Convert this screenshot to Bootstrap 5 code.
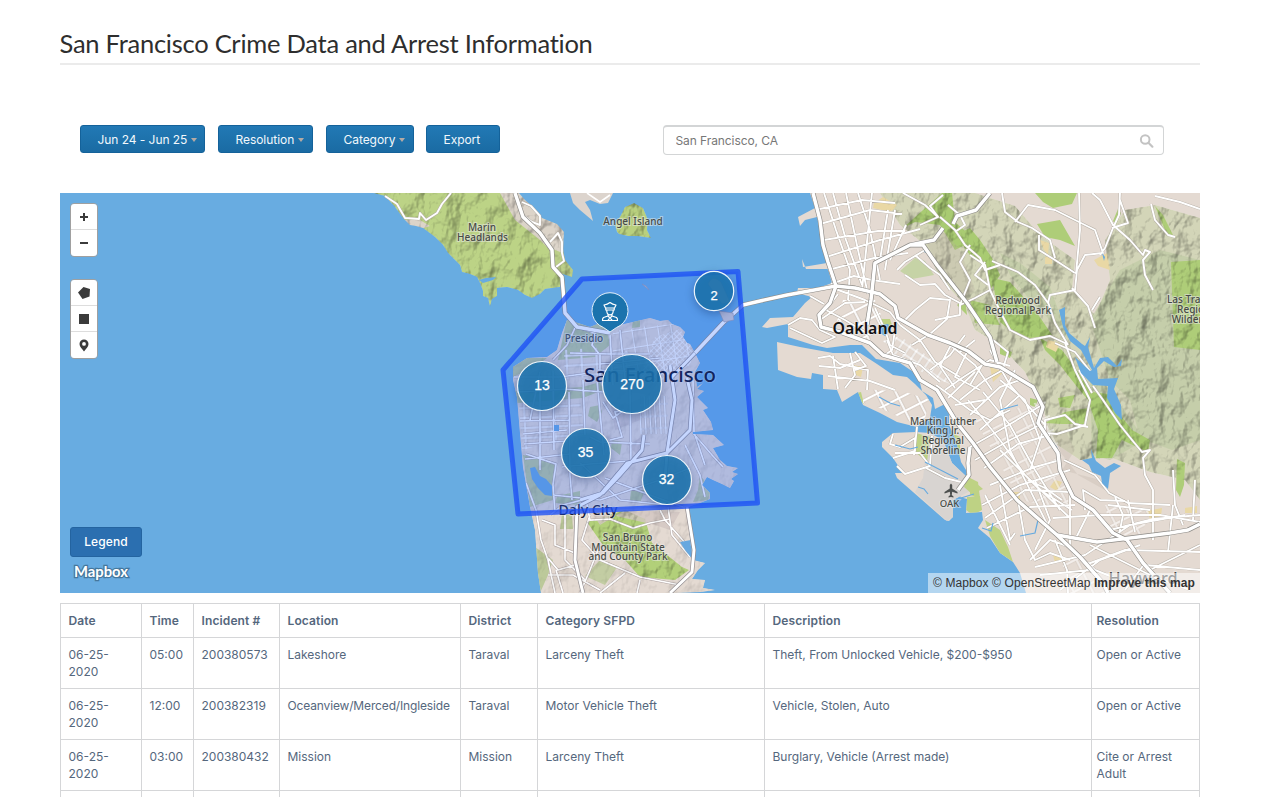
<!DOCTYPE html>
<html lang="en">
<head>
<meta charset="utf-8">
<meta name="viewport" content="width=device-width, initial-scale=1">
<title>San Francisco Crime Data and Arrest Information</title>
<link rel="stylesheet" href="https://cdn.jsdelivr.net/npm/bootstrap@5.3.0/dist/css/bootstrap.min.css">
<style>
body{font-family:Inter,"Liberation Sans",sans-serif;font-size:12px;color:#55677d;overflow:hidden;height:797px;background:#fff}
.page-wrap{width:1140px;height:797px;margin-left:60px}
.page-title{font-family:Lato,sans-serif;font-weight:400;font-size:25.5px;line-height:36px;color:#2e2e2e;border-bottom:2px solid #ebebeb;padding-top:25px;height:65px;margin:0 0 0 -.5px;letter-spacing:-.25px;font-variant-ligatures:none}
.toolbar{padding:60px 36px 0 20px;height:128px}
.btn-filter{height:28px;padding:0 0 0 16.5px;font-size:12px;line-height:27px;color:#f2f8fc;background:linear-gradient(#2279b5,#1a6ba3);border:1px solid #14629a;border-radius:3px;text-align:left;letter-spacing:-.05px;white-space:nowrap;--bs-btn-hover-color:#fff}
.btn-filter:hover{background:#1a6ba3}
.btn-filter .caret{display:inline-block;border:3.5px solid transparent;border-top:4px solid #b5aaa4;border-bottom:0;vertical-align:2px;margin-left:3.5px}
.search-box{width:501px;height:30px;border:1px solid #d3d5d6;border-top-width:2px;border-radius:4px;padding:0 8px 0 11.5px}
.search-box input{font-size:12px;color:#777;letter-spacing:-.08px;background:none}
.map-box{width:1140px;height:400px}
.map-box>svg{display:block}
.tool-stack{left:10px;width:28px;border:1px solid #a0a0a0;border-radius:4px;overflow:hidden}
.tool-stack button{display:flex;align-items:center;justify-content:center;width:26px;height:26px;border:0;border-bottom:1px solid #ddd;background:#fff;padding:0}
.tool-stack button:last-child{border-bottom:0}
.btn-legend{left:10px;top:334px;width:72px;height:30px;background:#2b6fb0;border:1px solid #2464a0;border-radius:3px;color:#fff;font-size:12px;font-weight:500;padding:0;letter-spacing:.1px}
.attrib{right:0;bottom:0;width:272px;height:20px;background:rgba(255,255,255,.5);font:12px/20px "Liberation Sans",sans-serif;color:#333;padding-left:5px;white-space:nowrap;letter-spacing:.1px}
.crime-table{table-layout:fixed;width:1139px;margin-top:10px;border-color:#d5d6d8;color:#55677d}
.crime-table th,.crime-table td{padding:8px 4px 0 7.5px;line-height:17px;border-color:#d5d6d8;letter-spacing:0;vertical-align:top;color:#55677d}
.crime-table th{height:34px;font-weight:600;letter-spacing:.12px}
.crime-table td{height:51px}
.crime-table .tight{letter-spacing:-.15px}
.crime-table tr>:last-child{padding-left:4.5px}
.lbl{font-family:"Noto Sans",sans-serif;font-size:10px;text-anchor:middle;fill:#484b46;stroke:#eee;stroke-opacity:.5;stroke-width:2px;paint-order:stroke;font-weight:500}
.cnt{font-family:"Liberation Sans",sans-serif;font-size:14px;text-anchor:middle;fill:#fff;stroke:#fff;stroke-width:.25}
.terrain{mix-blend-mode:multiply}
</style>
</head>
<body>
<main class="page-wrap overflow-hidden">
<h1 class="page-title">San Francisco Crime Data and Arrest Information</h1>
<div class="toolbar d-flex justify-content-between align-items-start">
  <div class="d-flex">
    <button class="btn btn-filter" style="width:125px;margin-right:13px">Jun 24 - Jun 25<i class="caret"></i></button>
    <button class="btn btn-filter" style="width:95px;margin-right:13px">Resolution<i class="caret"></i></button>
    <button class="btn btn-filter" style="width:88px;margin-right:12px">Category<i class="caret"></i></button>
    <button class="btn btn-filter" style="width:74px">Export</button>
  </div>
  <div class="search-box d-flex align-items-center">
    <input class="border-0 p-0 flex-grow-1" value="San Francisco, CA" aria-label="Location">
    <svg width="16" height="16" viewBox="0 0 16 16" fill="none" stroke="#c3c3c3" stroke-linecap="round"><circle cx="6.2" cy="6.5" r="4.3" stroke-width="2"/><path d="M9.7 10 13.4 13.7" stroke-width="2.2"/></svg>
  </div>
</div>

<div class="map-box position-relative overflow-hidden">
<svg width="1140" height="400" viewBox="60 193 1140 400">
<defs>
  <filter id="relief" x="0" y="0" width="100%" height="100%" color-interpolation-filters="sRGB"><feTurbulence type="fractalNoise" baseFrequency=".055 .04" numOctaves="4" seed="8"/><feDiffuseLighting surfaceScale="7" diffuseConstant="1.2" lighting-color="#fff"><feDistantLight azimuth="225" elevation="54"/></feDiffuseLighting></filter>
  <pattern id="gridA" width="13" height="17" patternUnits="userSpaceOnUse" patternTransform="rotate(-9)"><path d="M0 0H13M0 0V17" stroke="#bdb3aa" stroke-width="2.6"/><path d="M0 0H13M0 0V17" stroke="#fff" stroke-width="2"/></pattern>
  <pattern id="gridB" width="17" height="14" patternUnits="userSpaceOnUse" patternTransform="rotate(-27)"><path d="M8 0V14M0 7H17" stroke="#bdb3aa" stroke-width="2.7"/><path d="M8 0V14M0 7H17" stroke="#fff" stroke-width="1.8"/></pattern>
  <pattern id="gridC" width="8" height="9" patternUnits="userSpaceOnUse" patternTransform="rotate(34)"><path d="M4 0V9M0 4H8" stroke="#bdb3aa" stroke-width="2.2"/><path d="M4 0V9M0 4H8" stroke="#fff" stroke-width="1.5"/></pattern>
  <pattern id="gridD" width="15" height="10" patternUnits="userSpaceOnUse" patternTransform="rotate(-3)"><path d="M7 0V10M0 5H15" stroke="#b3aaa6" stroke-width="2.3"/><path d="M7 0V10M0 5H15" stroke="#fff" stroke-width="1.5"/></pattern>
  <pattern id="gridF" width="5" height="12" patternUnits="userSpaceOnUse" patternTransform="rotate(-3)"><path d="M2.500 0V12M0 6H5" stroke="#b3aaa6" stroke-width="1.9"/><path d="M2.500 0V12M0 6H5" stroke="#fff" stroke-width="1.2"/></pattern>
  <pattern id="gridE" width="4" height="4" patternUnits="userSpaceOnUse" patternTransform="rotate(-45)"><path d="M0 0H4M0 0V4" stroke="#fff" stroke-width="1.3"/></pattern>
  <path id="marin" d="M373 193 385 196 395 207 403 218 410 225 416 226 423 228 435 237 443 245 448 253 460 265 462 272 470 274 477 277 480 283 483 291 483 296 488 298 490 307 492 299 497 296 497 288 507 287 518 290 525 295 532 298 540 294 545 289 560 287 562 279 557 272 572 277 573 270 565 260 563 249 564 232 557 224 542 218 533 207 525 200 519 193Z"/>
  <path id="angel" d="M617 232 615 225 621 215 625 207 634 203 643 208 648 220 647 230 651 238 637 236 628 236 619 234Z"/>
  <path id="sf" d="M567 320 562 333 557 350 547 357 527 358 513 367 513 380 517 397 520 433 523 467 530 507 535 530 538 573 541 593H673L700 592 715 590 703 588 705 580 692 579 698 570 705 563 693 560 690 540 688 507 700 503 710 499 710 493 702 485 707 477 713 480 722 484 730 488 734 481 731 479 738 474 732 472 738 468 727 466 720 460 713 448 724 445 713 435 693 434 693 432 713 430 711 422 703 410 708 408 697 397 704 391 697 389 703 383 697 387 695 372 700 363 695 353 690 344 687 343 683 337 685 332 680 327 672 324 668 320 660 321 650 318 633 322 620 325 600 323 590 327 578 323Z"/>
  <path id="east" d="M810 193 815 208 798 217 800 226 805 220 817 217 823 243 827 263 803 267 802 259 806 269 828 269 832 283 818 288 798 288 797 293 812 297 805 303 793 317 770 318 762 327 767 328 788 324 788 337 813 345 827 348 850 345 862 345 876 359 900 363 918 375 922 391 933 398 935 409 945 404 949 413 949 425 956 440 961 462 966 470 968 485 960 497 967 499 966 513 982 512 983 520 978 528 990 538 1000 553 1013 562 1020 573 1026 593H1200V193ZM777 342 778 370 797 377 811 379 812 373 823 375 823 389 837 390 842 402 858 392 863 405 880 413 897 422 917 427 930 418 932 405 926 395 915 384 907 377 893 375 877 364 860 353 833 353 800 347ZM893 433 882 442 882 447 893 458 903 473 895 473 897 478 945 520 949 521 953 517 953 500 970 491 968 478 952 463 943 440 930 433 916 432Z"/>
  <path id="hills" d="M880 193H975L1015 206 1040 235 1075 260 1072 290 1095 315 1110 280 1105 240 1125 210 1155 205 1200 218V500L1185 480 1150 472 1112 458 1080 460 1050 440 1044 410 1025 372 1000 345 975 330 965 305 940 278 925 245 900 225Z"/>
  <path id="bruno" d="M587 522 625 510 645 519 652 543 682 567 689 570 675 580 640 577 625 560 605 548Z"/>
  <clipPath id="cm"><use href="#marin"/></clipPath><clipPath id="cs"><use href="#sf"/></clipPath><clipPath id="ce"><use href="#east"/></clipPath><clipPath id="ch"><use href="#hills"/></clipPath><clipPath id="cpark"><use href="#bruno"/></clipPath><clipPath id="ca"><use href="#angel"/></clipPath>
  <g id="minor" fill="none">
    <path d="M824 193 836 230 850 270 848 300M833 193 846 240 862 285M846 193 858 250 868 294M858 193 870 230 880 280M872 193 862 290M888 210 880 260M895 210 885 270M906 225 890 260M815 210 862 200 895 203M820 224 870 210 902 214M824 240 878 231 905 231M826 257 880 240 920 229M828 270 874 258 908 253M831 284 854 276 872 280 900 284M833 288 865 300 890 312 900 325M838 294 826 310 845 320 870 335M820 320 845 303 865 302M788 325 800 318 812 320 820 330 835 337 822 343 790 328M810 296 824 304M885 355 892 350 895 330M875 308 885 330 890 345 905 353"/>
    <path d="M818 358 830 356 840 364 868 370 867 390M819 366 840 368 860 360M833 356 838 389M850 353 855 375 845 388M828 376 870 381 895 390M855 352 866 366 855 370M887 340 893 355 920 365 940 382M900 325 920 340 935 362 960 377M912 345 930 334 947 319 950 300 930 298 915 310 905 320M905 275 920 285 935 284 945 295 960 303 960 315 935 320M920 225 938 217 930 206 943 195M940 217 955 230 965 245 980 258 985 270 1000 265M970 245 960 262 970 280 960 305 975 298 990 290M915 255 930 268 940 275 950 290M897 270 905 262 925 250M985 262 975 275 988 285M948 205 960 215 965 225 955 232"/>
    <path d="M945 390 962 378 990 360 1010 366M930 370 950 355 965 335M936 385 970 410 990 420 1010 410M952 343 940 366 955 388M968 350 955 377 980 390M985 360 970 385M960 400 985 380 1003 370M970 415 1000 387 1020 380M980 430 1020 395M968 400 1000 440 1025 475 1070 518M983 392 1010 425 1035 470 1060 510M1000 380 1025 400 1040 440M990 350 1010 385 1045 425 1030 470M1015 370 1000 400 1010 450 1050 530M970 447 1000 430 1042 405M975 460 1010 440 1040 425M984 468 1018 444 1050 435M990 485 1035 467 1060 460M982 505 1020 485 1070 470M985 518 1025 490 1070 492M987 528 1030 507 1075 505M1000 485 1010 540 1015 533M1018 500 1025 540 1035 560 1050 553 1070 560M1035 480 1050 520 1035 550M1000 450 1040 490 1072 510M985 495 1010 545M948 398 975 372M955 405 985 400M950 345 975 365 992 390M975 340 960 352M993 340 1008 352 1002 372"/>
    <path d="M903 193 925 205 938 217M1002 193 1005 212 1018 222 1032 228 1050 240 1055 258M1015 222 1028 205 1055 210 1085 225 1095 230 1103 253 1085 255 1077 270 1075 290 1050 295 1048 303 1035 285 1018 272 992 261M1039 235 1039 250 1055 260 1075 273M1079 193 1080 230 1076 274M1120 193 1119 215 1113 228 1105 248 1100 255M1120 200 1128 223 1112 228M1155 196 1180 202 1200 209M1151 204 1155 220 1168 235 1175 237M1072 288 1088 306 1095 328M1092 310 1100 297M1048 302 1055 323 1068 345M970 255 985 265 990 290 1002 315 1010 330 1030 340 1050 336 1065 343 1075 370 1090 400 1085 425 1057 434 1045 433 1045 420 1065 415 1075 424 1088 427M1064 460 1085 470 1095 475 1109 493 1128 503 1170 505M1092 193 1100 200 1113 225 1130 240 1143 255 1145 250 1150 252 1143 260 1145 275 1153 290"/>
    <path d="M1055 343 1075 352 1093 375M1079 370 1092 393M1093 386 1103 400 1120 425 1132 440 1142 452 1150 450 1143 458 1145 475 1153 490V540M1085 510 1083 490 1100 500 1125 501M1128 500 1135 532M1053 518 1100 515 1160 515 1200 522M1070 493V545M1090 510 1075 540M1115 497 1123 515 1118 540M1030 560 1050 540 1070 547 1095 570 1120 580M1055 540 1067 570 1068 593M1035 567 1085 555 1130 525 1185 515M1060 590 1100 560 1140 545M1145 563 1125 590M1150 570 1200 545M1145 565 1200 570M1173 505 1168 552M1173 470 1175 505 1183 525M1195 480 1193 520M1110 530 1153 519 1200 515M1090 545 1150 575 1190 590M1108 505 1150 510M1028 480 1045 488 1062 500M1040 575 1090 570M1085 565 1125 550 1200 552"/>
    <path d="M893 434 890 444 900 447 915 438 915 451 893 458M895 453 920 453 930 466 905 474 897 466M917 427 914 455M932 436 930 465M926 468 945 478 965 483"/>
    <path d="M385 196 397 204 405 218 419 219 420 213 426 220 437 213 442 204 451 193M523 215 532 222 540 225 540 216 531 206 522 202M550 242 558 233 562 242 562 253 564 261 556 267"/>
  </g>
  <g id="sfmin" fill="none">
    <path d="M514 377 560 377 590 373M517 392 565 389 603 392M520 421 570 420M523 434 567 430M524 444 567 441M525 459 570 454M526 483 536 510 541 540 548 560 555 593M540 390 540 470M553 371 554 450M569 392 570 475 572 500M583 380 585 435M597 380 604 455M526 454 556 464 553 485 555 512M562 467 590 464 630 461 665 456M553 495 600 500 660 480 690 468M580 463 620 500 668 505M605 478 650 495 683 507M540 372 530 420M577 327 595 333 592 345 600 355 600 377M575 328 567 345 553 360M570 353 610 354 650 354M600 364 660 358M598 370 650 372M610 335 613 385M620 330 626 388M603 402 613 418 624 410 615 412 622 437 610 440M630 390 631 462M693 380 694 432 705 465M693 433 712 455 723 467M685 445 700 475 705 497M590 437 600 442 650 444M660 510 665 520 687 545M668 507 672 535 690 557M542 520 555 525 555 545 575 553 575 565 558 570 548 558M550 515 563 505 582 500M590 515 582 540 600 560 640 577 680 585M586 500 590 520 610 519 633 528 650 523 670 519M600 545 590 570 580 593M548 575 573 575 600 590M565 510 565 560 585 580M600 593 625 573M640 580 637 593M556 570 563 593"/>
  </g>
  <g id="major" fill="none">
    <path d="M515 193 523 217 540 233 552 250 553 267 562 277 565 313 577 327 610 333"/>
    <path d="M695 353 723 323 743 305 760 301 787 295 836 286 855 288 880 294 895 306 898 318 928 335 950 343 968 351 985 364 1000 367 1033 387 1043 407 1038 423 1058 453 1060 470 1073 497 1093 510 1113 533 1127 540 1143 563 1170 593"/>
    <path d="M813 193 820 220 823 245 828 262 836 286 830 303 819 315 821 327 840 332 870 343 883 355 910 363 920 380 937 390 957 423 973 443 990 467 1017 500 1057 535 1080 557 1103 583 1108 593"/>
    <path d="M867 325 871 300 875 263 910 245 923 245 937 265 967 303 990 337 997 362M910 245 934 240 943 228M990 193 976 210 957 216 953 224M1057 535 1097 542 1130 538 1170 533 1188 530 1200 524M970 447 968 463 969 475 958 490"/>
  </g>
  <g id="sfmaj" fill="none"><path d="M670 365 675 400 667 453 665 480M687 378 692 400 690 430 667 453 627 463 600 495 577 507 575 560 583 593M687 507 694 550 692 572 670 593M644 435 642 450 620 475 603 493 580 500M672 377 695 353"/></g>
</defs>
<rect x="60" y="193" width="1140" height="400" fill="#68ace1"/>

<g>
  <g clip-path="url(#cm)">
    <use href="#marin" fill="#bcd386"/>
    <path d="M468 193H500L515 220 540 240 560 260 570 235 550 213 525 193ZM404 220H420L430 226 412 232Z" fill="#dcd4c9"/><path d="M548 247 575 258V280L552 272Z" fill="#bccf89"/>
    <rect class="terrain" x="370" y="190" width="210" height="120" filter="url(#relief)" opacity=".38"/></g>
  <path d="M479 280 486 278 496 277 493 280 483 283Z" fill="#68ace1"/>
  <path d="M570 193 573 203 580 210 593 221 590 210 585 202 590 200 600 204 608 203 613 193Z" fill="#dcd4cd"/>
  <path d="M587 193 600 202 610 195" fill="none" stroke="#fff" stroke-width="1.6"/>
  <g clip-path="url(#ca)"><use href="#angel" fill="#b9d07e"/><rect class="terrain" x="612" y="200" width="42" height="40" filter="url(#relief)" opacity=".45"/></g>
</g>

<g>
  <use href="#sf" fill="#e4dad2"/>
  <g clip-path="url(#cs)">
    <use href="#sf" fill="#e4dad2"/>
    <path d="M567 318 606 325 610 345 595 357 558 360ZM513 358H547L535 367 513 377ZM515 391 583 387 600 382 603 390 583 398 517 403ZM590 407 600 405 602 412 597 422 588 416ZM523 455 540 458 555 465 553 500 530 507ZM557 496 580 491V505L555 503ZM631 490 645 490 640 503 630 500ZM612 440 622 442 620 455 611 448ZM535 547 553 560 548 575 540 593H538ZM562 513 572 516 573 529 560 529ZM633 320 640 320 640 327 632 328Z" fill="#bcc99a"/>
    <path d="M700 475 711 489 708 500 693 502 698 490ZM600 560 618 566 605 585 585 576Z" fill="#c3cda3"/>
    <use href="#bruno" fill="#b2d079"/>
    <path d="M612 375 630 365 665 370 650 395 630 392ZM610 400 625 405 648 395 640 420 615 430ZM628 445 645 435 640 458ZM590 510 600 525 625 510 680 512 670 530 655 525Z" fill="#d2c6c2" opacity=".8"/>
    <path d="M564 350 610 347 628 351 627 374 565 379ZM519 403 580 400 584 434 522 450Z" fill="url(#gridD)"/>
    <path d="M613 333 640 327 675 324 690 345 690 360 650 377 612 375Z" fill="url(#gridA)" opacity=".9"/>
    <path d="M655 337 680 329 693 350 690 365 655 384 640 377Z" fill="url(#gridE)"/>
    <path d="M640 396H668V434H640Z" fill="url(#gridF)"/>
    <g stroke="#aea3a2" stroke-width="2.6"><use href="#sfmin"/></g><g stroke="#fff" stroke-width="1.7"><use href="#sfmin"/></g>
    <rect class="terrain" x="510" y="315" width="240" height="280" filter="url(#relief)" opacity=".12"/>
    <rect class="terrain" x="580" y="508" width="115" height="78" clip-path="url(#cpark)" filter="url(#relief)" opacity=".28"/>
    <path d="M530 468 535 467 540 476 546 479 552 486 552 496 545 495 538 488 532 479ZM554 425H559V431H554ZM680 542 691 540 693 560 685 550Z" fill="#67a8df"/>
  </g>
  <g stroke="#938e91" stroke-width="4.4"><use href="#sfmaj"/></g><g stroke="#fff" stroke-width="3"><use href="#sfmaj"/></g>
</g>

<g>
  <use href="#east" fill="#e4dad2"/>
  <path d="M928 434 943 440 952 463 968 478 970 491 953 500 953 517 947 521 915 492 923 478Z" fill="#d8d4d1"/>
  <g clip-path="url(#ce)">
    <use href="#hills" fill="#d3d5b8"/>
    <path d="M1000 253 1020 263 1050 287 1068 338 1050 320 1030 300 1010 275ZM1090 320 1120 270 1160 250 1200 260V440L1172 450 1145 440 1138 430 1130 400 1110 380ZM1090 370 1110 390 1138 430 1130 400 1120 385 1128 374 1150 400 1172 450 1145 440 1110 460 1092 455Z" fill="#bdc9a0" opacity=".6"/>
    <path d="M903 228 942 193 952 193 955 222 975 240 955 250 940 225 915 222ZM970 228 980 240 992 258 1000 275 990 290 985 265 970 255 955 235ZM992 278 1010 282 1035 310 1052 335 1030 338 1010 330 1000 322ZM1040 338 1062 350 1078 372 1092 392 1108 394 1118 412 1132 430 1150 440 1148 452 1122 440 1112 458 1096 458 1098 430 1088 400 1078 388 1060 365 1045 350Z" fill="#a9cb72"/>
    <path d="M1035 193H1077L1072 204 1053 208 1043 202ZM1037 224 1060 220 1075 246 1060 240 1045 237ZM1118 209 1121 213 1116 225 1113 221ZM1171 262 1200 260V350L1174 347ZM1155 206 1163 215 1173 235 1167 235ZM1177 459 1185 463 1184 485 1180 497 1176 490ZM1045 423 1065 412 1088 408 1085 424 1062 424ZM1058 398 1075 395 1070 408 1060 407ZM957 305 965 298 967 315ZM970 300 990 305 1000 325 975 323ZM1000 347 1012 352 1010 358 1000 354ZM1030 398 1038 400 1035 407 1030 405Z" fill="#aecd78"/>
    <path d="M900 271 915 258 925 261 934 275 912 279Z" fill="#c6d3a6"/>
    <path d="M916 433 930 437 927 462 914 451ZM945 430 960 437 960 458 950 447ZM967 475 983 489 972 494 964 487ZM967 497 980 496 982 510 973 515 966 510ZM970 478 978 482 980 498 970 495ZM985 520 1000 530 1008 547 1013 562 1000 553 990 536ZM788 197 797 196 802 207 794 209ZM857 393 861 392 864 404 859 400ZM878 319 890 319 892 325 880 327Z" fill="#bed284"/>
    <path d="M874 203 883 197 897 205 891 212 873 208ZM853 365 863 367 861 377 853 374ZM1040 240 1049 243 1048 255 1044 250ZM1045 257H1052V264H1045ZM1094 260 1107 253 1110 270 1098 266ZM1048 340 1060 343 1056 352 1046 347ZM990 367 1004 372 993 382ZM1055 480 1062 482 1057 491 1050 487ZM1012 492 1020 492 1020 502ZM1053 555 1063 558 1055 563ZM1147 511 1162 508 1161 516 1150 519ZM1185 508 1197 506V513H1185Z" fill="#e9d8a5"/>
    <rect class="terrain" x="880" y="190" width="325" height="325" clip-path="url(#ch)" filter="url(#relief)" opacity=".42"/>
    <path d="M925 240 945 232 960 250 975 290 960 300 945 277ZM1047 435 1065 430 1075 450 1062 470 1100 480 1105 490 1078 475Z" fill="#b6aaa0" opacity=".25"/>
    <path d="M843 300 875 300 885 325 870 340 835 328Z" fill="url(#gridB)"/>
    <path d="M883 341 900 336 933 360 965 390 935 378 900 362Z" fill="url(#gridC)"/>
    <path d="M863 389 905 392 930 400 925 418 915 424 880 408 863 403Z" fill="url(#gridB)"/>
    <path d="M975 420 1045 400 1060 450 1070 510 1020 500Z" fill="url(#gridB)" opacity=".5"/>
    <path d="M1105 505 1150 510 1140 540 1110 530ZM1060 555 1080 550 1105 593H1070Z" fill="url(#gridB)" opacity=".55"/>
  </g>
  <g stroke="#b3aca3" stroke-width="2.7" stroke-linejoin="round"><use href="#minor"/></g><g stroke="#fff" stroke-width="1.9" stroke-linejoin="round"><use href="#minor"/></g>
  <path d="M879 325 888 324 891 329 885 336 880 333ZM1059 310 1065 307 1065 325 1069 333 1082 344 1085 346 1090 337 1088 347 1094 368 1100 358 1108 357 1117 366 1122 359 1121 366 1114 367 1104 361 1097 368 1098 379 1118 378 1114 389 1121 405 1122 420 1115 413 1107 398 1108 386 1093 385 1081 373 1075 357 1090 371 1092 370 1081 350 1070 341 1063 327ZM1082 460 1092 458 1091 449 1096 461 1105 468 1114 463 1121 466 1110 473 1108 489 1102 483 1101 476 1092 472 1089 465ZM1102 253 1105 257 1104 261ZM923 247 928 251 925 253Z" fill="#67aadf"/>
  <g fill="none" stroke="#67aadf" stroke-width="1.2"><path d="M879 397 890 403 900 406M895 445 910 449 918 447M918 487 924 489 928 494M961 498 974 494M1000 410 1018 405M1020 536 1035 533 1038 520M982 528 991 531 993 523M1051 440 1057 448M925 462 958 479"/></g>
</g>
<g stroke="#8d8b87" stroke-width="4.800" stroke-linejoin="round"><use href="#major"/></g><g stroke="#fff" stroke-width="3.5" stroke-linejoin="round"><use href="#major"/></g>
<path d="M708 284Q712 274 721 282L730 302 722 304ZM719 311 733 313 734 320 724 322ZM642 284 649 290 646 286Z" fill="#d5cccb" stroke="#9b98a8" stroke-width=".6"/>

<g class="lbl">
  <text x="482" y="231">Marin</text><text x="482.500" y="241">Headlands</text><text x="633" y="225">Angel Island</text><text x="584" y="342">Presidio</text>
  <text x="627.500" y="541">San Bruno</text><text x="628" y="551">Mountain State</text><text x="628" y="560">and County Park</text>
  <text x="1017.500" y="304">Redwood</text><text x="1018" y="314">Regional Park</text>
  <text x="943" y="425">Martin Luther</text><text x="943" y="434">King Jr.</text><text x="943" y="444">Regional</text><text x="943" y="454">Shoreline</text>
  <text x="1167" y="303" text-anchor="start" style="text-anchor:start">Las Trampas</text><text x="1198" y="313">Regional</text><text x="1198" y="323">Wilderness</text><text x="949.500" y="507" style="font-size:9.500px">OAK</text>
  <text x="865" y="334" style="font-size:16px;fill:#111;font-weight:600" textLength="65" lengthAdjust="spacingAndGlyphs">Oakland</text>
  <text x="650" y="382" style="font-size:20px;fill:#0b0b22;stroke-opacity:.25" textLength="132" lengthAdjust="spacingAndGlyphs">San Francisco</text>
  <text x="588" y="515" style="font-size:14px;fill:#1a1a35" textLength="59" lengthAdjust="spacingAndGlyphs">Daly City</text>
  <text x="1143" y="584" style="font-size:16px;fill:#444" textLength="69" lengthAdjust="spacingAndGlyphs">Hayward</text>
</g>
<path d="M951 483.500 952.200 485V488.500L957.500 492V493.500L952.200 491.800 951.800 495 953.500 496.500V497.500L951 497 948.500 497.500V496.500L950.200 495 949.800 491.800 944.500 493.500V492L949.800 488.500V485Z" fill="#4d504f"/>

<path d="M582 279 738 271.500 757.500 503 518 514 503 370Z" fill="#2a66ff" fill-opacity=".27" stroke="#1c4ff5" stroke-opacity=".78" stroke-width="5" stroke-linejoin="round"/>

<g fill="#1b73ad" fill-opacity=".86" stroke="#edf5fb" stroke-width="1.200" style="filter:drop-shadow(0 3px 4px rgba(0,30,80,.35))">
  <circle cx="542" cy="386" r="24.500"/><circle cx="632" cy="384" r="29.500"/><circle cx="586" cy="453" r="24.500"/><circle cx="667" cy="480" r="24.500"/><circle cx="714" cy="291" r="19.700"/>
</g>
<path d="M610 332 603.500 327.500A18 18 0 1 1 616.500 327.500Z" fill="#1b73ad" stroke="#e4f0f9"/>
<g fill="none" stroke="#fff" stroke-width="1.200" stroke-linejoin="round"><path d="M604 305Q607.500 304.500 610 302.500 612.500 304.500 616 305L614.500 308H605.500ZM605.800 308V310H614.200V308M606.800 310Q606.500 314.800 610 314.800 613.500 314.800 613.200 310M608 314.500V316L603.500 317.500Q602.300 318.500 602.500 320.500H617.500Q617.700 318.500 616.500 317.500L612 316V314.500M608 316 612 320M612 316 608 320"/></g>
<g class="cnt"><text x="542" y="390">13</text><text x="632" y="388.500">270</text><text x="585.500" y="457">35</text><text x="666.500" y="484">32</text><text x="714" y="300" style="font-size:13px">2</text></g>
<text x="74" y="577" textLength="54" lengthAdjust="spacingAndGlyphs" style="font:700 14.500px Lato,sans-serif;fill:#fff;stroke:#44779d;stroke-width:2.500px;paint-order:stroke">Mapbox</text>
</svg>
<div class="tool-stack position-absolute" style="top:10px">
  <button aria-label="Zoom in"><svg width="10" height="10"><path d="M1 5H9M5 1V9" stroke="#3b3b3b" stroke-width="2"/></svg></button>
  <button aria-label="Zoom out"><svg width="10" height="10"><path d="M1 5H9" stroke="#3b3b3b" stroke-width="2"/></svg></button>
</div>
<div class="tool-stack position-absolute" style="top:86px">
  <button aria-label="Draw polygon"><svg width="14" height="14"><path d="M6.500 1 13 3 12.500 10.500 5.500 13 1 6.500Z" fill="#3b3b3b"/></svg></button>
  <button aria-label="Draw rectangle"><svg width="10" height="10"><path d="M0 0H10V10H0Z" fill="#3b3b3b"/></svg></button>
  <button aria-label="Draw marker"><svg width="10" height="13"><path fill-rule="evenodd" d="M5 .500A4.500 4.500 0 0 1 9.500 5C9.500 8 7 9.500 5 12.500 3 9.500.500 8 .500 5A4.500 4.500 0 0 1 5 .500ZM5 3A1.900 1.900 0 1 0 5 6.800 1.900 1.900 0 0 0 5 3Z" fill="#3b3b3b"/></svg></button>
</div>
<button class="btn btn-legend position-absolute">Legend</button>
<div class="attrib position-absolute">© Mapbox © OpenStreetMap <b>Improve this map</b></div>
</div>

<table class="table table-bordered crime-table mb-0">
<colgroup><col style="width:81px"><col style="width:52px"><col style="width:86px"><col style="width:181px"><col style="width:77px"><col style="width:227px"><col style="width:327px"><col style="width:108px"></colgroup>
<thead><tr><th>Date</th><th>Time</th><th>Incident #</th><th>Location</th><th>District</th><th>Category SFPD</th><th>Description</th><th>Resolution</th></tr></thead>
<tbody>
<tr><td>06-25-<br>2020</td><td>05:00</td><td>200380573</td><td>Lakeshore</td><td>Taraval</td><td>Larceny Theft</td><td>Theft, From Unlocked Vehicle, $200-$950</td><td>Open or Active</td></tr>
<tr><td>06-25-<br>2020</td><td>12:00</td><td>200382319</td><td class="tight">Oceanview/Merced/Ingleside</td><td>Taraval</td><td>Motor Vehicle Theft</td><td>Vehicle, Stolen, Auto</td><td>Open or Active</td></tr>
<tr><td>06-25-<br>2020</td><td>03:00</td><td>200380432</td><td>Mission</td><td>Mission</td><td>Larceny Theft</td><td>Burglary, Vehicle (Arrest made)</td><td>Cite or Arrest Adult</td></tr>
<tr><td></td><td></td><td></td><td></td><td></td><td></td><td></td><td></td></tr>
</tbody>
</table>
</main>
<script src="https://cdn.jsdelivr.net/npm/bootstrap@5.3.0/dist/js/bootstrap.bundle.min.js"></script>
</body>
</html>
